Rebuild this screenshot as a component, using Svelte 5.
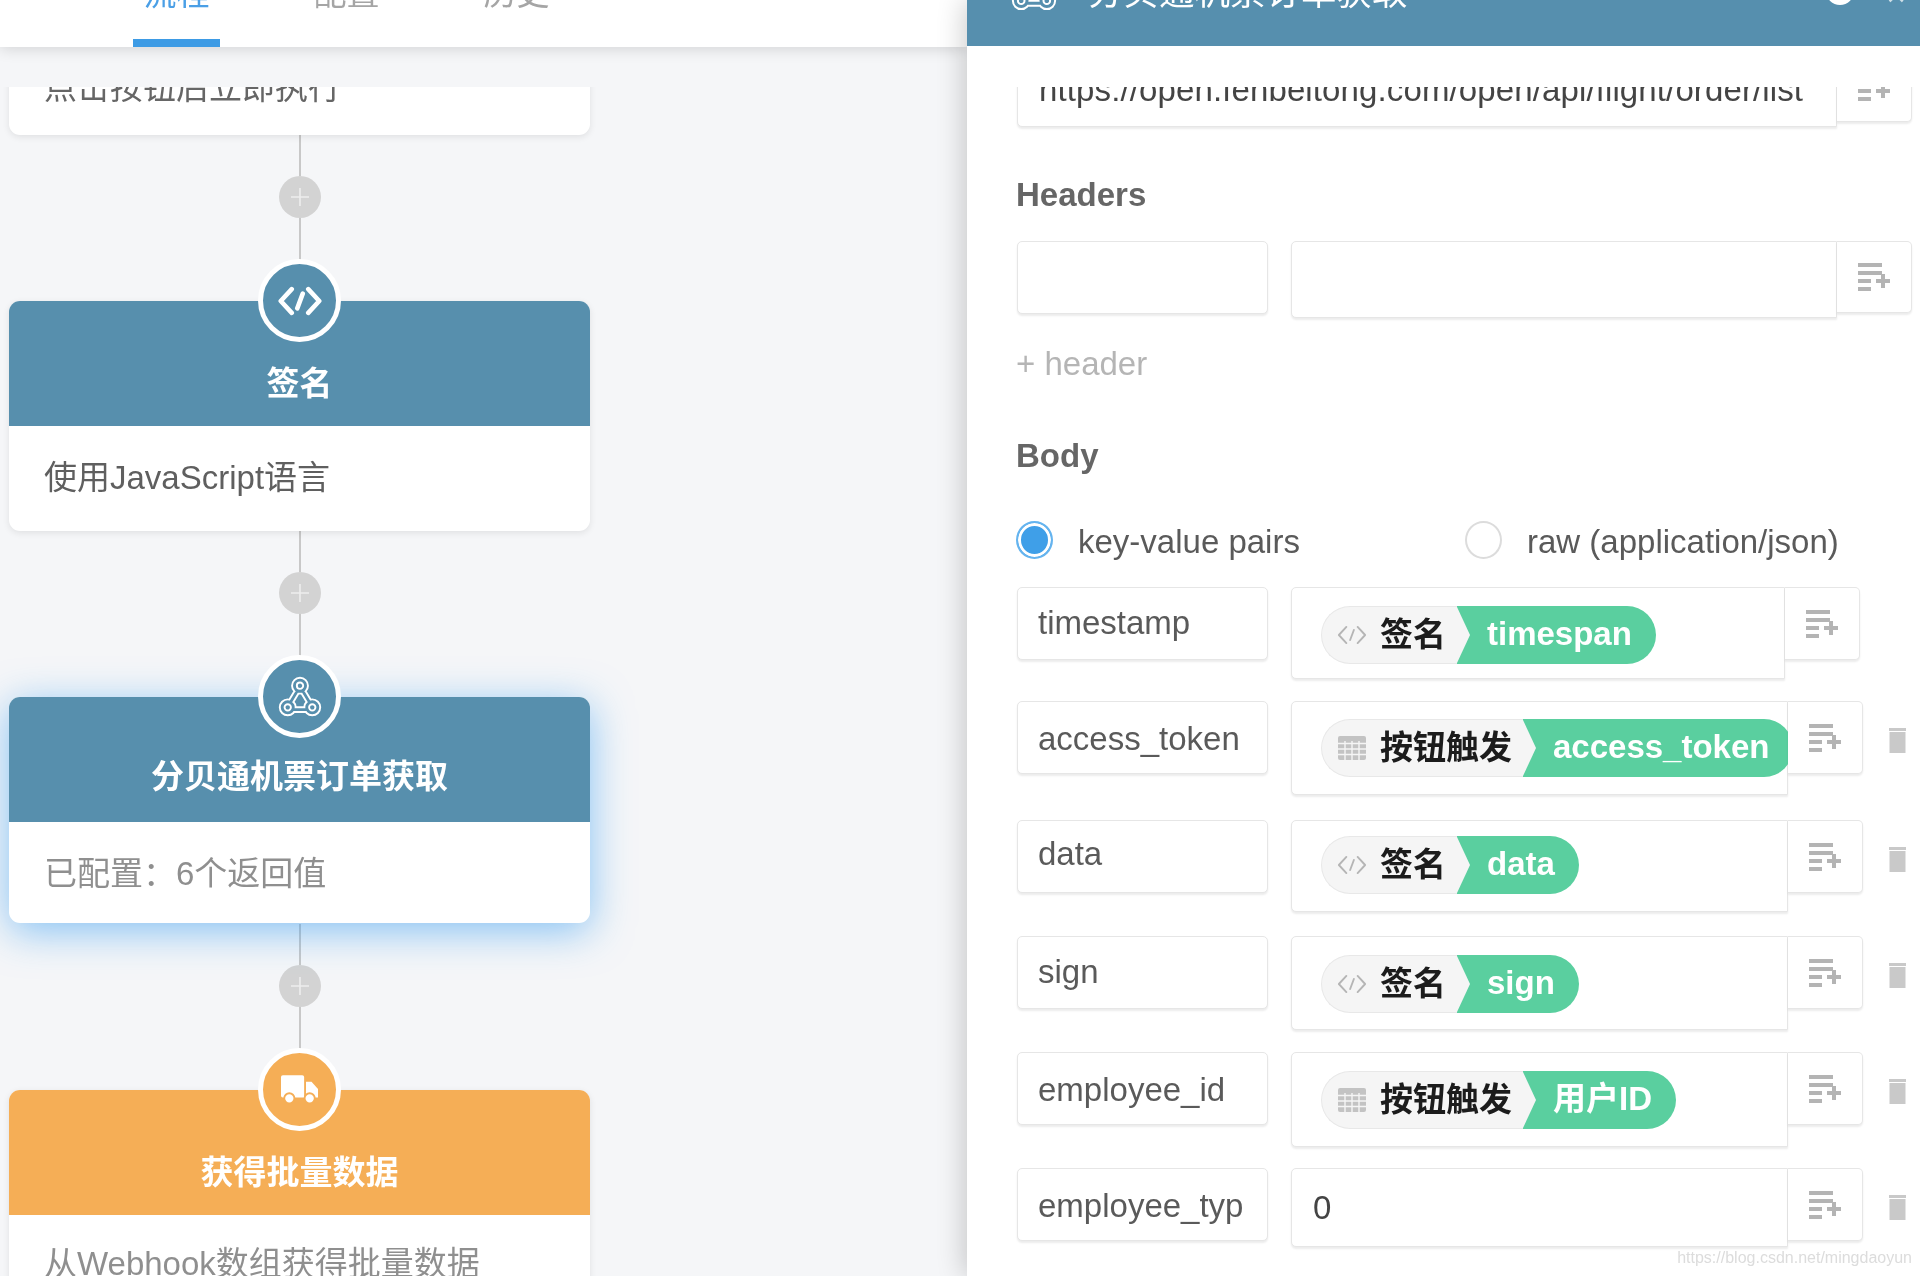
<script>
  const nodes = [
    { title: '签名', body: '使用JavaScript语言', icon: 'code', tone: 'blue' },
    { title: '分贝通机票订单获取', body: '已配置\uFF1A6个返回值', icon: 'hook', tone: 'blue', active: true, muted: true },
    { title: '获得批量数据', body: '从Webhook数组获得批量数据', icon: 'truck', tone: 'orange', muted: true }
  ];
  const rows = [
    { key: 'timestamp', src: '签名', kind: 'code', val: 'timespan', w: 494, h: 92, gap: 22, lh: 69, pt: 18, trash: false },
    { key: 'access_token', src: '按钮触发', kind: 'grid', val: 'access_token', w: 497, h: 94, gap: 25, lh: 73, pt: 17, trash: true },
    { key: 'data', src: '签名', kind: 'code', val: 'data', w: 497, h: 92, gap: 24, lh: 66, pt: 15, trash: true },
    { key: 'sign', src: '签名', kind: 'code', val: 'sign', w: 497, h: 94, gap: 22, lh: 69, pt: 18, trash: true },
    { key: 'employee_id', src: '按钮触发', kind: 'grid', val: '用户ID', w: 497, h: 95, gap: 21, lh: 73, pt: 18, trash: true },
    { key: 'employee_typ', text: '0', w: 497, h: 79, gap: 0, lh: 73, pt: 0, trash: true }
  ];
</script>

{#snippet codeIcon(size, color, sw)}
  <svg width={size} height={size} viewBox="0 0 24 24" fill="none" stroke={color} stroke-width={sw} stroke-linecap="round" stroke-linejoin="round">
    <path d="M7.5 5.5 1.5 12l6 6.5M16.5 5.5l6 6.5-6 6.5M13.5 8l-3 8" />
  </svg>
{/snippet}

{#snippet hookIcon(size)}
  <svg width={size} height={size} viewBox="0 0 24 24" fill="none" stroke-linecap="round">
    <path id="hook-shape" stroke="#fff" stroke-width="3.5" d="M12 3.2a2.9 2.9 0 1 1 0 5.8a2.9 2.9 0 1 1 0-5.8ZM5.6 14.5a2.9 2.9 0 1 1 0 5.8a2.9 2.9 0 1 1 0-5.8ZM18.4 14.5a2.9 2.9 0 1 1 0 5.8a2.9 2.9 0 1 1 0-5.8ZM10.6 8.8 7 14.8M13.4 8.8l3.6 6M8.5 18.6h7" />
    <path stroke="#568fae" stroke-width="1.5" d="M12 3.2a2.9 2.9 0 1 1 0 5.8a2.9 2.9 0 1 1 0-5.8ZM5.6 14.5a2.9 2.9 0 1 1 0 5.8a2.9 2.9 0 1 1 0-5.8ZM18.4 14.5a2.9 2.9 0 1 1 0 5.8a2.9 2.9 0 1 1 0-5.8ZM10.6 8.8 7 14.8M13.4 8.8l3.6 6M8.5 18.6h7" />
  </svg>
{/snippet}

{#snippet truckIcon()}
  <svg width="37" height="30" viewBox="0 0 40 32" fill="#fff">
    <path d="M2 0h21a2 2 0 0 1 2 2v22H2a2 2 0 0 1-2-2V2a2 2 0 0 1 2-2Z" />
    <path d="M27 7h6l7 8v9H27Z" />
    <circle cx="9" cy="25" r="5.5" stroke="#f5ae56" stroke-width="2" />
    <circle cx="31" cy="25" r="5.5" stroke="#f5ae56" stroke-width="2" />
  </svg>
{/snippet}

{#snippet addList()}
  <svg width="32" height="28" viewBox="0 0 32 28" fill="#b4b4b4">
    <rect x="0" y="0" width="24" height="4" />
    <rect x="0" y="8" width="24" height="4" />
    <rect x="0" y="16" width="13" height="4" />
    <rect x="0" y="24" width="13" height="4" />
    <rect x="18" y="16" width="14" height="4" />
    <rect x="23" y="11" width="4" height="14" />
  </svg>
{/snippet}

{#snippet trashIcon()}
  <svg class="trash" width="19" height="25" viewBox="0 0 19 25" fill="#c9c9c9">
    <rect x="1" y="0" width="17" height="3" />
    <rect x="1.5" y="4" width="16" height="21" />
  </svg>
{/snippet}

{#snippet gridIcon()}
  <svg width="28" height="24" viewBox="0 0 28 24">
    <rect width="28" height="24" rx="2" fill="#c3c3c3" />
    <path d="M0 7.5h28M0 13h28M0 18.5h28M7 5v19M14 5v19M21 5v19" stroke="#f5f5f5" stroke-width="1.4" />
  </svg>
{/snippet}

<div class="page">
  <section class="flow">
    <nav class="tabs">
      <span class="tab on">流程</span>
      <span class="tab">配置</span>
      <span class="tab">历史</span>
    </nav>
    <div class="canvas">
      <div class="card first">
        <div class="card-body">点击按钮后立即执行</div>
      </div>
      {#each nodes as n}
        <div class="link">
          <i class="line short"></i>
          <span class="plus">
            <svg width="18" height="18" viewBox="0 0 18 18" stroke="#eee" stroke-width="1.6"><path d="M9 0v18M0 9h18" /></svg>
          </span>
          <i class="line"></i>
        </div>
        <div class="card" class:active={n.active}>
          <div class="badge" class:orange={n.tone === 'orange'}>
            {#if n.icon === 'code'}
              {@render codeIcon(44, '#fff', 2.5)}
            {:else if n.icon === 'hook'}
              {@render hookIcon(46)}
            {:else}
              {@render truckIcon()}
            {/if}
          </div>
          <div class="card-head" class:orange={n.tone === 'orange'}>{n.title}</div>
          <div class="card-body" class:muted={n.muted}>{n.body}</div>
        </div>
      {/each}
    </div>
  </section>

  <aside class="panel">
    <header class="panel-head">
      <span class="head-icon">{@render hookIcon(48)}</span>
      <span class="head-title">分贝通机票订单获取</span>
      <span class="head-dot"></span>
      <span class="head-x">×</span>
    </header>
    <div class="form">
      <div class="row url">
        <div class="field value plain url-field">https://open.fenbeitong.com/open/api/flight/order/list</div>
        <div class="addon url-addon">{@render addList()}</div>
      </div>

      <h3 class="heading headers">Headers</h3>
      <div class="row">
        <div class="field key empty"></div>
        <div class="field value head-value"></div>
        <div class="addon head-addon">{@render addList()}</div>
      </div>
      <div class="add-link">+ header</div>

      <h3 class="heading body-title">Body</h3>
      <div class="radios">
        <label class="radio"><span class="dot on"></span>key-value pairs</label>
        <label class="radio second"><span class="dot"></span>raw (application/json)</label>
      </div>

      <div class="params">
        {#each rows as r}
          <div class="row" style="margin-bottom:{r.gap}px">
            <div class="field key" style="line-height:{r.lh}px">{r.key}</div>
            <div class="field value" class:plain={r.text} style="width:{r.w}px;height:{r.h}px">
              {#if r.text}
                {r.text}
              {:else}
                <div class="pill" style="margin-top:{r.pt}px">
                  <span class="src">
                    <span class="src-icon">
                      {#if r.kind === 'code'}
                        {@render codeIcon(30, '#b5b5b5', 1.5)}
                      {:else}
                        {@render gridIcon()}
                      {/if}
                    </span>
                    {r.src}
                  </span>
                  <span class="val">{r.val}</span>
                </div>
              {/if}
            </div>
            <div class="addon">{@render addList()}</div>
            {#if r.trash}{@render trashIcon()}{/if}
          </div>
        {/each}
      </div>
    </div>
    <div class="mark">https://blog.csdn.net/mingdaoyun</div>
  </aside>
</div>

<style>
  :global(body) {
    margin: 0;
    background: #f5f6f8;
  }
  .page {
    display: flex;
    width: 1920px;
    height: 1276px;
    overflow: hidden;
    background: #f5f6f8;
    font-family: "Liberation Sans", "Noto Sans CJK SC", sans-serif;
    font-size: 33px;
    line-height: 37px;
    color: #5a5a5a;
    filter: blur(0.7px);
  }

  /* left column */
  .flow {
    width: 967px;
    flex: none;
    display: flex;
    flex-direction: column;
  }
  .tabs {
    height: 46.5px;
    flex: none;
    display: flex;
    align-items: flex-end;
    gap: 83px;
    padding-left: 133px;
    background: #fff;
    box-shadow: 0 2px 14px rgba(0, 0, 0, 0.14);
    position: relative;
    z-index: 1;
    box-sizing: border-box;
  }
  .tab {
    width: 87px;
    flex: none;
    text-align: center;
    color: #a5a5a5;
    padding-bottom: 27px;
    border-bottom: 8.5px solid transparent;
  }
  .tab.on {
    color: #4a9fe6;
    border-bottom-color: #3d9be5;
  }
  .canvas {
    flex: 1;
    min-height: 0;
    margin-top: 40.5px;
    padding: 0 0 0 9px;
    overflow: hidden;
    display: flex;
    flex-direction: column;
  }
  .card {
    position: relative;
    flex: none;
    width: 581px;
    border-radius: 11px;
    background: #fff;
    box-shadow: 0 2px 7px rgba(0, 0, 0, 0.09);
  }
  .card.first {
    margin-top: -18px;
    border-radius: 0 0 11px 11px;
  }
  .card.first .card-body {
    padding: 0 35px 29px;
    height: 66px;
    box-sizing: border-box;
    color: #666;
  }
  .card.active {
    margin-bottom: 1px;
    box-shadow: 0 8px 40px rgba(40, 150, 240, 0.55);
  }
  .card-head {
    height: 125px;
    box-sizing: border-box;
    padding-top: 64px;
    text-align: center;
    font-weight: 700;
    color: #fff;
    background: #578fad;
    border-radius: 11px 11px 0 0;
  }
  .card.active .card-head {
    padding-top: 61px;
  }
  .card-head.orange {
    background: #f5ae56;
  }
  .card-body {
    padding: 33px 35px 35px;
    color: #5f5f5f;
  }
  .card-body.muted {
    padding: 30px 35px 34px;
    color: #8f8f8f;
  }
  .card.active .card-body {
    padding: 33px 35px 31px;
  }
  .badge {
    position: absolute;
    z-index: 1;
    left: 50%;
    top: -42px;
    width: 83px;
    height: 83px;
    margin-left: -41.5px;
    box-sizing: border-box;
    border: 5px solid #fff;
    border-radius: 50%;
    background: #578fad;
    display: flex;
    align-items: center;
    justify-content: center;
  }
  .badge.orange {
    background: #f5ae56;
  }
  .link {
    flex: none;
    width: 581px;
    height: 166px;
    display: flex;
    flex-direction: column;
    align-items: center;
  }
  .line {
    display: block;
    width: 2px;
    height: 42px;
    background: #c8c8c8;
  }
  .line.short {
    height: 41px;
  }
  .plus {
    flex: none;
    width: 42px;
    height: 42px;
    border-radius: 50%;
    background: #d3d3d3;
    display: flex;
    align-items: center;
    justify-content: center;
  }

  /* right panel */
  .panel {
    position: relative;
    z-index: 2;
    flex: 1;
    min-width: 0;
    display: flex;
    flex-direction: column;
    background: #fff;
    box-shadow: -3px 0 26px rgba(0, 0, 0, 0.2);
  }
  .panel-head {
    height: 46px;
    flex: none;
    box-sizing: border-box;
    display: flex;
    align-items: flex-end;
    padding: 0 0 34px 43px;
    background: #568fae;
    color: #fff;
  }
  .head-icon {
    width: 48px;
    height: 48px;
    flex: none;
    margin-bottom: -2px;
  }
  .head-title {
    flex: none;
    margin-left: 30px;
    font-size: 35.5px;
    white-space: nowrap;
  }
  .head-dot {
    flex: none;
    width: 28px;
    height: 28px;
    margin-left: 418px;
    margin-bottom: 7px;
    border-radius: 50%;
    background: #fff;
  }
  .head-x {
    flex: none;
    margin-left: 33px;
    margin-bottom: -1px;
    color: #cfe0e8;
  }
  .form {
    flex: 1;
    min-height: 0;
    margin-top: 41px;
    padding: 0 8px 0 50px;
    overflow: hidden;
  }
  .row {
    display: flex;
    align-items: flex-start;
  }
  .field {
    box-sizing: border-box;
    background: #fff;
    border: 1px solid #e6e6e6;
    border-radius: 5px;
    box-shadow: 0 2px 2px rgba(0, 0, 0, 0.08);
    white-space: nowrap;
  }
  .key {
    flex: none;
    width: 250.5px;
    height: 73px;
    margin-right: 23.5px;
    padding: 0 20px;
    line-height: 71px;
  }
  .value {
    flex: none;
    border-radius: 5px 0 0 5px;
    padding-left: 29px;
  }
  .value.plain {
    padding-left: 21px;
    display: flex;
    align-items: center;
    color: #444;
  }
  .url {
    margin-top: -36px;
  }
  .url-field {
    width: 820px;
    height: 76px;
    padding-left: 20px;
    letter-spacing: 0.12px;
  }
  .addon {
    flex: none;
    box-sizing: border-box;
    width: 75px;
    height: 73px;
    display: flex;
    align-items: center;
    justify-content: center;
    background: #fff;
    border: 1px solid #e6e6e6;
    border-left: none;
    border-radius: 0 5px 5px 0;
    box-shadow: 0 2px 2px rgba(0, 0, 0, 0.08);
  }
  .url-addon {
    height: 71px;
  }
  .heading {
    margin: 0;
    font-size: 33px;
    line-height: 40px;
    font-weight: 700;
    color: #666;
  }
  .headers {
    margin-top: 48px;
    margin-bottom: 26px;
    margin-left: -1px;
  }
  .head-value {
    width: 546px;
    height: 77px;
  }
  .head-addon {
    height: 72px;
  }
  .add-link {
    margin-top: 26px;
    margin-left: -1px;
    line-height: 40px;
    color: #b5b5b5;
  }
  .body-title {
    margin-top: 52px;
    margin-left: -1px;
  }
  .radios {
    display: flex;
    margin-top: 45px;
    margin-left: -1px;
    height: 38px;
  }
  .radio {
    display: flex;
    align-items: center;
    width: 449px;
    flex: none;
    line-height: 42px;
    height: 42px;
  }
  .dot {
    box-sizing: border-box;
    flex: none;
    width: 37px;
    height: 38px;
    margin-right: 25px;
    margin-top: -4px;
    border-radius: 50%;
    border: 2px solid #dcdcdc;
    background: #fff;
  }
  .dot.on {
    border-color: #65b4ef;
    background: #3f9fe8;
    box-shadow: inset 0 0 0 3px #fff;
  }
  .params {
    margin-top: 28px;
  }
  .pill {
    display: inline-flex;
    height: 58px;
    color: #1c1c1c;
    line-height: 56px;
  }
  .src {
    position: relative;
    display: flex;
    align-items: center;
    box-sizing: border-box;
    padding: 0 11px 0 15px;
    background: #f5f5f5;
    border: 1px solid #e8e8e8;
    border-right: none;
    border-radius: 29px 0 0 29px;
    font-weight: 700;
  }
  .src::after {
    content: "";
    position: absolute;
    top: 0;
    bottom: 0;
    left: 100%;
    width: 13px;
    background: #f5f5f5;
    clip-path: polygon(0 0, 100% 50%, 0 100%);
  }
  .src-icon {
    display: flex;
    align-items: center;
    justify-content: center;
    width: 30px;
    margin-right: 13px;
  }
  .val {
    background: #5acf9f;
    color: #fff;
    font-weight: 700;
    padding: 0 24px 0 30px;
    border-radius: 0 29px 29px 0;
    white-space: nowrap;
  }
  .trash {
    flex: none;
    margin: 27px 0 0 25px;
  }
  .mark {
    position: absolute;
    right: 8px;
    bottom: 8px;
    font-size: 16px;
    line-height: 20px;
    color: #dcdcdc;
    white-space: nowrap;
  }
</style>
